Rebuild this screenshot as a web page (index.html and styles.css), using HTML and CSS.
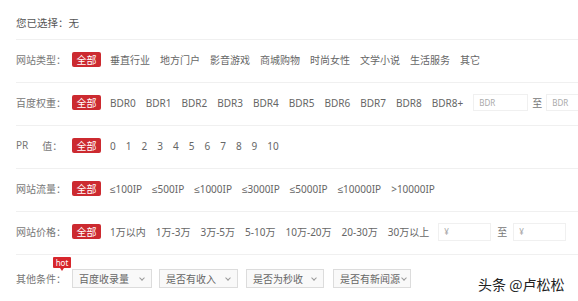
FILE: index.html
```html
<!DOCTYPE html>
<html lang="zh">
<head>
<meta charset="utf-8">
<title>筛选</title>
<link rel="stylesheet" href="styles.css">
</head>
<body>
<div class="page">
  <div class="selected">您已选择：无</div>

  <div class="row">
    <span class="label">网站类型：</span>
    <span class="all">全部</span>
    <span class="opt">垂直行业</span>
    <span class="opt">地方门户</span>
    <span class="opt">影音游戏</span>
    <span class="opt">商城购物</span>
    <span class="opt">时尚女性</span>
    <span class="opt">文学小说</span>
    <span class="opt">生活服务</span>
    <span class="opt">其它</span>
  </div>

  <div class="row">
    <span class="label">百度权重：</span>
    <span class="all">全部</span>
    <span class="opt">BDR0</span>
    <span class="opt">BDR1</span>
    <span class="opt">BDR2</span>
    <span class="opt">BDR3</span>
    <span class="opt">BDR4</span>
    <span class="opt">BDR5</span>
    <span class="opt">BDR6</span>
    <span class="opt">BDR7</span>
    <span class="opt">BDR8</span>
    <span class="opt">BDR8+</span>
    <span class="range">
      <input class="box box-bdr" placeholder="BDR">
      <span class="to">至</span>
      <input class="box box-bdr" placeholder="BDR">
    </span>
  </div>

  <div class="row">
    <span class="label"><span>PR</span><span class="pr-gap">值：</span></span>
    <span class="all">全部</span>
    <span class="opt">0</span>
    <span class="opt">1</span>
    <span class="opt">2</span>
    <span class="opt">3</span>
    <span class="opt">4</span>
    <span class="opt">5</span>
    <span class="opt">6</span>
    <span class="opt">7</span>
    <span class="opt">8</span>
    <span class="opt">9</span>
    <span class="opt">10</span>
  </div>

  <div class="row">
    <span class="label">网站流量：</span>
    <span class="all">全部</span>
    <span class="opt">≤100IP</span>
    <span class="opt">≤500IP</span>
    <span class="opt">≤1000IP</span>
    <span class="opt">≤3000IP</span>
    <span class="opt">≤5000IP</span>
    <span class="opt">≤10000IP</span>
    <span class="opt">&gt;10000IP</span>
  </div>

  <div class="row">
    <span class="label">网站价格：</span>
    <span class="all">全部</span>
    <span class="opt">1万以内</span>
    <span class="opt">1万-3万</span>
    <span class="opt">3万-5万</span>
    <span class="opt">5-10万</span>
    <span class="opt">10万-20万</span>
    <span class="opt">20-30万</span>
    <span class="opt">30万以上</span>
    <span class="range price">
      <input class="box box-price" placeholder="¥">
      <span class="to">至</span>
      <input class="box box-price" placeholder="¥">
    </span>
  </div>

  <div class="row last">
    <span class="label other">其他条件：<span class="hot">hot</span></span>
    <div class="selects">
      <span class="sel s1">百度收录量<i class="chev"></i></span>
      <span class="sel s2">是否有收入<i class="chev"></i></span>
      <span class="sel s3">是否为秒收<i class="chev"></i></span>
      <span class="sel s4">是否有新闻源<i class="chev"></i></span>
    </div>
  </div>
</div>
<div class="watermark">头条 @卢松松</div>
</body>
</html>
```

FILE: styles.css
```css
html, body {
  margin: 0;
  padding: 0;
  background: #ffffff;
  overflow: hidden;
}

body {
  width: 578px;
  height: 301px;
  position: relative;
  font-family: "Noto Sans", "Liberation Sans", "Noto Sans CJK SC", sans-serif;
  font-size: 10px;
  color: #666;
}

.page {
  padding-left: 16px;
}

.selected {
  height: 40px;
  box-sizing: border-box;
  padding-top: 5px;
  display: flex;
  align-items: center;
  border-bottom: 1px solid #f0f0f0;
  color: #555;
  font-size: 10.5px;
}

.row {
  height: 43px;
  box-sizing: border-box;
  padding-bottom: 3px;
  display: flex;
  align-items: center;
  gap: 10px;
  border-bottom: 1px solid #f0f0f0;
  white-space: nowrap;
}

.row.last {
  border-bottom: none;
  padding-bottom: 0;
  padding-top: 1px;
  height: 46px;
}

.label {
  width: 56px;
  margin-right: -10px;
  flex: none;
  color: #777;
  display: flex;
}

.pr-gap {
  margin-left: 14px;
}

.all {
  flex: none;
  width: 29px;
  height: 15px;
  margin-right: -1px;
  background: #cc2a30;
  color: #fff;
  border-radius: 2px;
  display: flex;
  align-items: center;
  justify-content: center;
  font-size: 10px;
}

.opt {
  flex: none;
  color: #666;
}

.range {
  display: flex;
  align-items: center;
  gap: 4px;
  flex: none;
}

.range.price {
  gap: 6px;
  margin-left: -1px;
}

.box {
  box-sizing: border-box;
  border: 1px solid #f0f0f0;
  background: #fff;
  font-family: inherit;
  font-size: 8px;
  padding: 0 0 0 5px;
  margin: 0;
  outline: none;
  color: #aaa;
}

.box::placeholder {
  color: #aaa;
}

.box-bdr {
  width: 55px;
  height: 17px;
}

.box-price {
  width: 53px;
  height: 18px;
}

.to {
  color: #777;
  font-size: 10px;
}

.other {
  position: relative;
}

.hot {
  position: absolute;
  left: 37px;
  top: -14px;
  width: 18px;
  height: 11px;
  background: #d7262c;
  color: #fff;
  font-size: 8px;
  line-height: 11px;
  text-align: center;
  border-radius: 1px;
}

.hot::after {
  content: "";
  position: absolute;
  left: 7px;
  bottom: -3px;
  border-left: 2px solid transparent;
  border-right: 2px solid transparent;
  border-top: 3px solid #d7262c;
}

.selects {
  display: flex;
  gap: 7px;
}

.sel {
  box-sizing: border-box;
  height: 19px;
  border: 1px solid #dcdcdc;
  background: #f9f9f9;
  display: flex;
  align-items: center;
  justify-content: space-between;
  padding: 0 7px 0 6px;
  color: #666;
  font-size: 10px;
}

.s1 { width: 80px; }
.s2 { width: 79px; }
.s3 { width: 78px; margin-left: 1px; }
.s4 { width: 78px; margin-left: 2px; padding-right: 4px; }

.chev {
  width: 3px;
  height: 3px;
  border-right: 1px solid #999;
  border-bottom: 1px solid #999;
  transform: rotate(45deg);
  margin-top: -2px;
}

.watermark {
  position: absolute;
  left: 478px;
  top: 274px;
  font-size: 14px;
  color: #222;
  font-family: "Noto Sans CJK SC", sans-serif;
  text-shadow: 0 0 2px #fff, 0 0 2px #fff;
  white-space: nowrap;
}
```
